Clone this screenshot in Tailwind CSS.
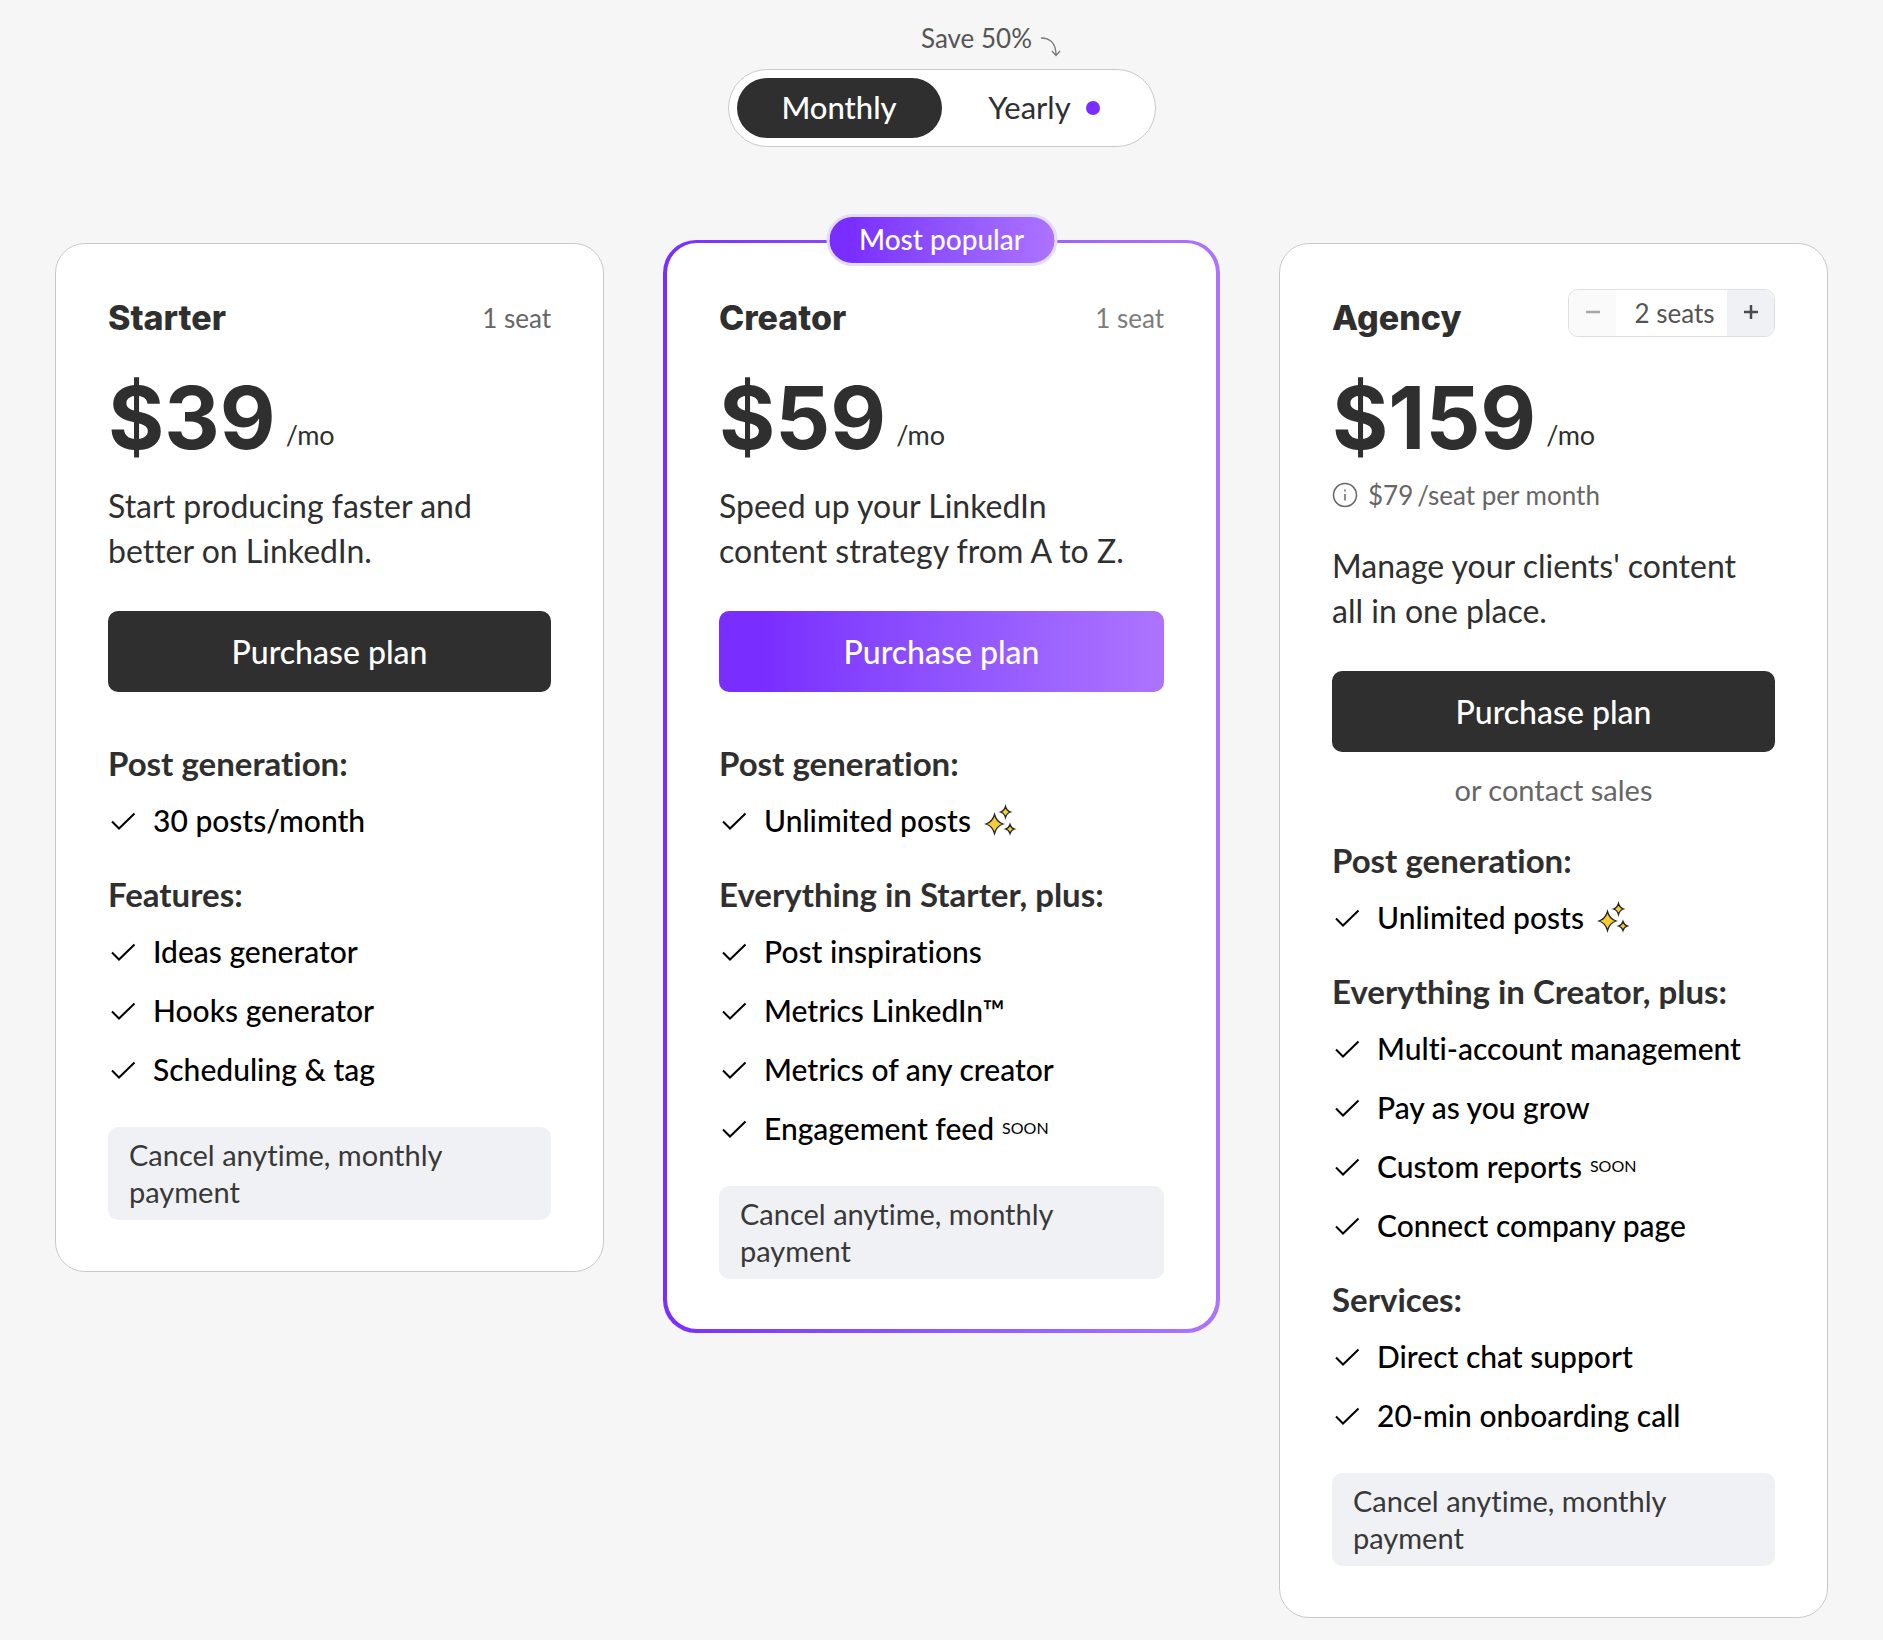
<!DOCTYPE html>
<html lang="en">
<head>
<meta charset="utf-8">
<meta name="viewport" content="width=device-width, initial-scale=1">
<title>Pricing</title>
<script src="https://cdn.jsdelivr.net/npm/@tailwindcss/browser@4"></script>
</head>
<body class="min-h-screen bg-[#f6f6f6] font-['Lato',sans-serif] text-[#2f2f2f] [font-variant-ligatures:none]">

<svg class="hidden" aria-hidden="true">
  <symbol id="check" viewBox="0 0 30 30">
    <path d="M4 16.5 11 23.5 26.5 8.5" fill="none" stroke="currentColor" stroke-width="2"/>
  </symbol>
  <symbol id="sparkles" viewBox="0 0 34 32">
    <g fill="#f5cc35" stroke="#222" stroke-width="1.3" stroke-linejoin="miter" stroke-miterlimit="8">
      <path d="M11.500 10.500Q13.500 18 20 20 13.500 22 11.500 29.500 9.500 22 3 20 9.500 18 11.500 10.500Z"/>
      <path d="M22.500 2.500Q23.700 6.800 27.500 8 23.700 9.200 22.500 13.500 21.300 9.200 17.500 8 21.300 6.800 22.500 2.500Z"/>
      <path d="M27 20.500Q28 24 31.500 25 28 26 27 29.500 26 26 22.500 25 26 24 27 20.500Z"/>
    </g>
  </symbol>
</svg>

<main class="px-[55px] py-[22px]">

  <section class="flex flex-col items-center">
    <p class="flex h-8 gap-2 pl-[100px] text-[26px] leading-8 text-[#555]">
      Save 50%
      <svg class="mt-3.5 h-6 w-[22px]" viewBox="0 0 22 24" fill="none" stroke="#777" stroke-width="1.3" aria-hidden="true">
        <path d="M1 2C9 2 16 6 16 19M12 15l4 4.500 4-4.500"/>
      </svg>
    </p>
    <div role="radiogroup" aria-label="Billing period" class="mt-[15px] grid h-[78px] w-[428px] grid-cols-2 rounded-full border border-[#c9c9c9] bg-white p-2 text-[31px]">
      <label class="relative flex cursor-pointer items-center justify-center rounded-full pb-0.5 has-checked:bg-[#2f2f2f] has-checked:font-medium has-checked:text-white">
        <input type="radio" name="billing" value="monthly" class="absolute inset-0 cursor-pointer appearance-none" checked>Monthly
      </label>
      <label class="relative flex cursor-pointer items-center justify-center gap-[15px] rounded-full pb-0.5 has-checked:bg-[#2f2f2f] has-checked:font-medium has-checked:text-white">
        <input type="radio" name="billing" value="yearly" class="absolute inset-0 cursor-pointer appearance-none">Yearly
        <span class="mt-0.5 size-3.5 rounded-full bg-[#7a2dff]"></span>
      </label>
    </div>
  </section>

  <section class="mt-24 grid grid-cols-3 items-start gap-[63px]">

    <article class="rounded-[30px] border border-[#c9c9c9] bg-white p-[52px] pb-[51px]">
      <header class="flex h-11 justify-between">
        <h2 class="font-['Inter',sans-serif] text-[34px] leading-11 font-extrabold">Starter</h2>
        <span class="text-[26px] leading-11 text-[#666]">1 seat</span>
      </header>
      <p class="mt-[35px] flex items-end gap-2.5">
        <span class="font-['Inter',sans-serif] text-[86px] leading-none font-bold">$39</span>
        <span class="pb-2.5 text-[27px] leading-8">/mo</span>
      </p>
      <p class="mt-[22px] pr-4 text-[32px] leading-[45px]">Start producing faster and better on LinkedIn.</p>
      <button type="button" class="mt-[38px] h-[81px] w-full rounded-[10px] bg-[#2f2f2f] text-[32px] font-medium text-white">Purchase plan</button>
      <div class="mt-[51px] flex flex-col gap-[34px] text-black">
        <section>
          <h3 class="text-[33px] leading-10 font-bold text-[#2f2f2f]">Post generation:</h3>
          <ul class="mt-[17px] flex flex-col gap-[19px] text-[30px] leading-10 font-medium">
            <li class="flex items-center gap-[15px]"><svg class="size-[30px]" aria-hidden="true"><use href="#check"/></svg>30 posts/month</li>
          </ul>
        </section>
        <section>
          <h3 class="text-[33px] leading-10 font-bold text-[#2f2f2f]">Features:</h3>
          <ul class="mt-[17px] flex flex-col gap-[19px] text-[30px] leading-10 font-medium">
            <li class="flex items-center gap-[15px]"><svg class="size-[30px]" aria-hidden="true"><use href="#check"/></svg>Ideas generator</li>
            <li class="flex items-center gap-[15px]"><svg class="size-[30px]" aria-hidden="true"><use href="#check"/></svg>Hooks generator</li>
            <li class="flex items-center gap-[15px]"><svg class="size-[30px]" aria-hidden="true"><use href="#check"/></svg>Scheduling &amp; tag</li>
          </ul>
        </section>
      </div>
      <p class="mt-[38px] rounded-[10px] bg-[#f0f1f4] px-[21px] pt-[9px] pb-2.5 text-[29px] leading-[37px] text-[#383838]">Cancel anytime, monthly payment</p>
    </article>

    <div class="relative -mx-1 -mt-[3px] rounded-[33px] bg-linear-to-r from-[#7a2dff] to-[#ad73ff] px-1 pt-[3px] pb-1">
      <span class="absolute top-0 left-1/2 -translate-1/2 rounded-full border-[3px] border-[#e2ddfb] bg-linear-to-r from-[#7a2dff] from-10% to-[#ad73ff] bg-origin-border px-[30px] pb-0.5 text-[28px] leading-[44px] font-medium whitespace-nowrap text-white">Most popular</span>
      <article class="rounded-[30px] bg-white px-[52px] pt-[53px] pb-[50px]">
        <header class="flex h-11 justify-between">
          <h2 class="font-['Inter',sans-serif] text-[34px] leading-11 font-extrabold">Creator</h2>
          <span class="text-[26px] leading-11 text-[#7c7c7c]">1 seat</span>
        </header>
        <p class="mt-[35px] flex items-end gap-2.5">
          <span class="font-['Inter',sans-serif] text-[86px] leading-none font-bold">$59</span>
          <span class="pb-2.5 text-[27px] leading-8">/mo</span>
        </p>
        <p class="mt-[22px] pr-4 text-[32px] leading-[45px]">Speed up your LinkedIn content strategy from A to Z.</p>
        <button type="button" class="mt-[38px] h-[81px] w-full rounded-[10px] bg-linear-to-r from-[#7a2dff] from-10% to-[#ad73ff] text-[32px] font-medium text-white">Purchase plan</button>
        <div class="mt-[51px] flex flex-col gap-[34px] text-black">
          <section>
            <h3 class="text-[33px] leading-10 font-bold text-[#2f2f2f]">Post generation:</h3>
            <ul class="mt-[17px] flex flex-col gap-[19px] text-[30px] leading-10 font-medium">
              <li class="flex items-center gap-[15px]"><svg class="size-[30px]" aria-hidden="true"><use href="#check"/></svg><span class="flex items-center gap-3">Unlimited posts<svg class="h-8 w-[34px]" aria-hidden="true"><use href="#sparkles"/></svg></span></li>
            </ul>
          </section>
          <section>
            <h3 class="text-[33px] leading-10 font-bold text-[#2f2f2f]">Everything in Starter, plus:</h3>
            <ul class="mt-[17px] flex flex-col gap-[19px] text-[30px] leading-10 font-medium">
              <li class="flex items-center gap-[15px]"><svg class="size-[30px]" aria-hidden="true"><use href="#check"/></svg>Post inspirations</li>
              <li class="flex items-center gap-[15px]"><svg class="size-[30px]" aria-hidden="true"><use href="#check"/></svg>Metrics LinkedIn™</li>
              <li class="flex items-center gap-[15px]"><svg class="size-[30px]" aria-hidden="true"><use href="#check"/></svg>Metrics of any creator</li>
              <li class="flex items-center gap-[15px]"><svg class="size-[30px]" aria-hidden="true"><use href="#check"/></svg><span class="flex items-center gap-2">Engagement feed<small class="text-base font-normal">SOON</small></span></li>
            </ul>
          </section>
        </div>
        <p class="mt-[38px] rounded-[10px] bg-[#f0f1f4] px-[21px] pt-[9px] pb-2.5 text-[29px] leading-[37px] text-[#383838]">Cancel anytime, monthly payment</p>
      </article>
    </div>

    <article class="rounded-[30px] border border-[#c9c9c9] bg-white p-[52px] pb-[51px]">
      <header class="flex h-11 justify-between">
        <h2 class="font-['Inter',sans-serif] text-[34px] leading-11 font-extrabold">Agency</h2>
        <div class="-mt-[7px] flex h-12 w-[207px] overflow-hidden rounded-[10px] border border-[#dedfe2] text-[26px] text-[#555]">
          <button type="button" aria-label="Remove seat" disabled class="flex w-[47px] items-center justify-center bg-[#fafafa] text-[#a8a8a8]">
            <svg class="size-4" viewBox="0 0 16 16" stroke="currentColor" stroke-width="2.5" aria-hidden="true"><path d="M1 7h14"/></svg>
          </button>
          <output class="flex flex-1 items-center justify-center pl-1.5">2 seats</output>
          <button type="button" aria-label="Add seat" class="flex w-[47px] items-center justify-center bg-[#f0f1f4] text-[#4a4a4a]">
            <svg class="size-4" viewBox="0 0 16 16" stroke="currentColor" stroke-width="2.5" aria-hidden="true"><path d="M1 7h14M8 0v14"/></svg>
          </button>
        </div>
      </header>
      <p class="mt-[35px] flex items-end gap-2.5">
        <span class="font-['Inter',sans-serif] text-[86px] leading-none font-bold">$159</span>
        <span class="pb-2.5 text-[27px] leading-8">/mo</span>
      </p>
      <p class="mt-[18px] flex items-center gap-2.5 text-[26px] leading-8 text-[#666]">
        <svg class="size-[26px]" viewBox="0 0 26 26" fill="none" stroke="currentColor" stroke-width="1.5" aria-hidden="true">
          <circle cx="13" cy="13" r="11.500"/><path d="M13 12v6.500M13 7.500v2"/>
        </svg>
        <span class="flex gap-1"><span>$79</span><span>/seat per month</span></span>
      </p>
      <p class="mt-8 pr-4 text-[32px] leading-[45px]">Manage your clients' content all in one place.</p>
      <button type="button" class="mt-[38px] h-[81px] w-full rounded-[10px] bg-[#2f2f2f] text-[32px] font-medium text-white">Purchase plan</button>
      <a href="#contact" class="mt-[19px] block text-center text-[29px] leading-[37px] text-[#666]">or contact sales</a>
      <div class="mt-8 flex flex-col gap-[34px] text-black">
        <section>
          <h3 class="text-[33px] leading-10 font-bold text-[#2f2f2f]">Post generation:</h3>
          <ul class="mt-[17px] flex flex-col gap-[19px] text-[30px] leading-10 font-medium">
            <li class="flex items-center gap-[15px]"><svg class="size-[30px]" aria-hidden="true"><use href="#check"/></svg><span class="flex items-center gap-3">Unlimited posts<svg class="h-8 w-[34px]" aria-hidden="true"><use href="#sparkles"/></svg></span></li>
          </ul>
        </section>
        <section>
          <h3 class="text-[33px] leading-10 font-bold text-[#2f2f2f]">Everything in Creator, plus:</h3>
          <ul class="mt-[17px] flex flex-col gap-[19px] text-[30px] leading-10 font-medium">
            <li class="flex items-center gap-[15px]"><svg class="size-[30px]" aria-hidden="true"><use href="#check"/></svg>Multi-account management</li>
            <li class="flex items-center gap-[15px]"><svg class="size-[30px]" aria-hidden="true"><use href="#check"/></svg>Pay as you grow</li>
            <li class="flex items-center gap-[15px]"><svg class="size-[30px]" aria-hidden="true"><use href="#check"/></svg><span class="flex items-center gap-2">Custom reports<small class="text-base font-normal">SOON</small></span></li>
            <li class="flex items-center gap-[15px]"><svg class="size-[30px]" aria-hidden="true"><use href="#check"/></svg>Connect company page</li>
          </ul>
        </section>
        <section>
          <h3 class="text-[33px] leading-10 font-bold text-[#2f2f2f]">Services:</h3>
          <ul class="mt-[17px] flex flex-col gap-[19px] text-[30px] leading-10 font-medium">
            <li class="flex items-center gap-[15px]"><svg class="size-[30px]" aria-hidden="true"><use href="#check"/></svg>Direct chat support</li>
            <li class="flex items-center gap-[15px]"><svg class="size-[30px]" aria-hidden="true"><use href="#check"/></svg>20-min onboarding call</li>
          </ul>
        </section>
      </div>
      <p class="mt-[38px] rounded-[10px] bg-[#f0f1f4] px-[21px] pt-[9px] pb-2.5 text-[29px] leading-[37px] text-[#383838]">Cancel anytime, monthly payment</p>
    </article>

  </section>
</main>
</body>
</html>
